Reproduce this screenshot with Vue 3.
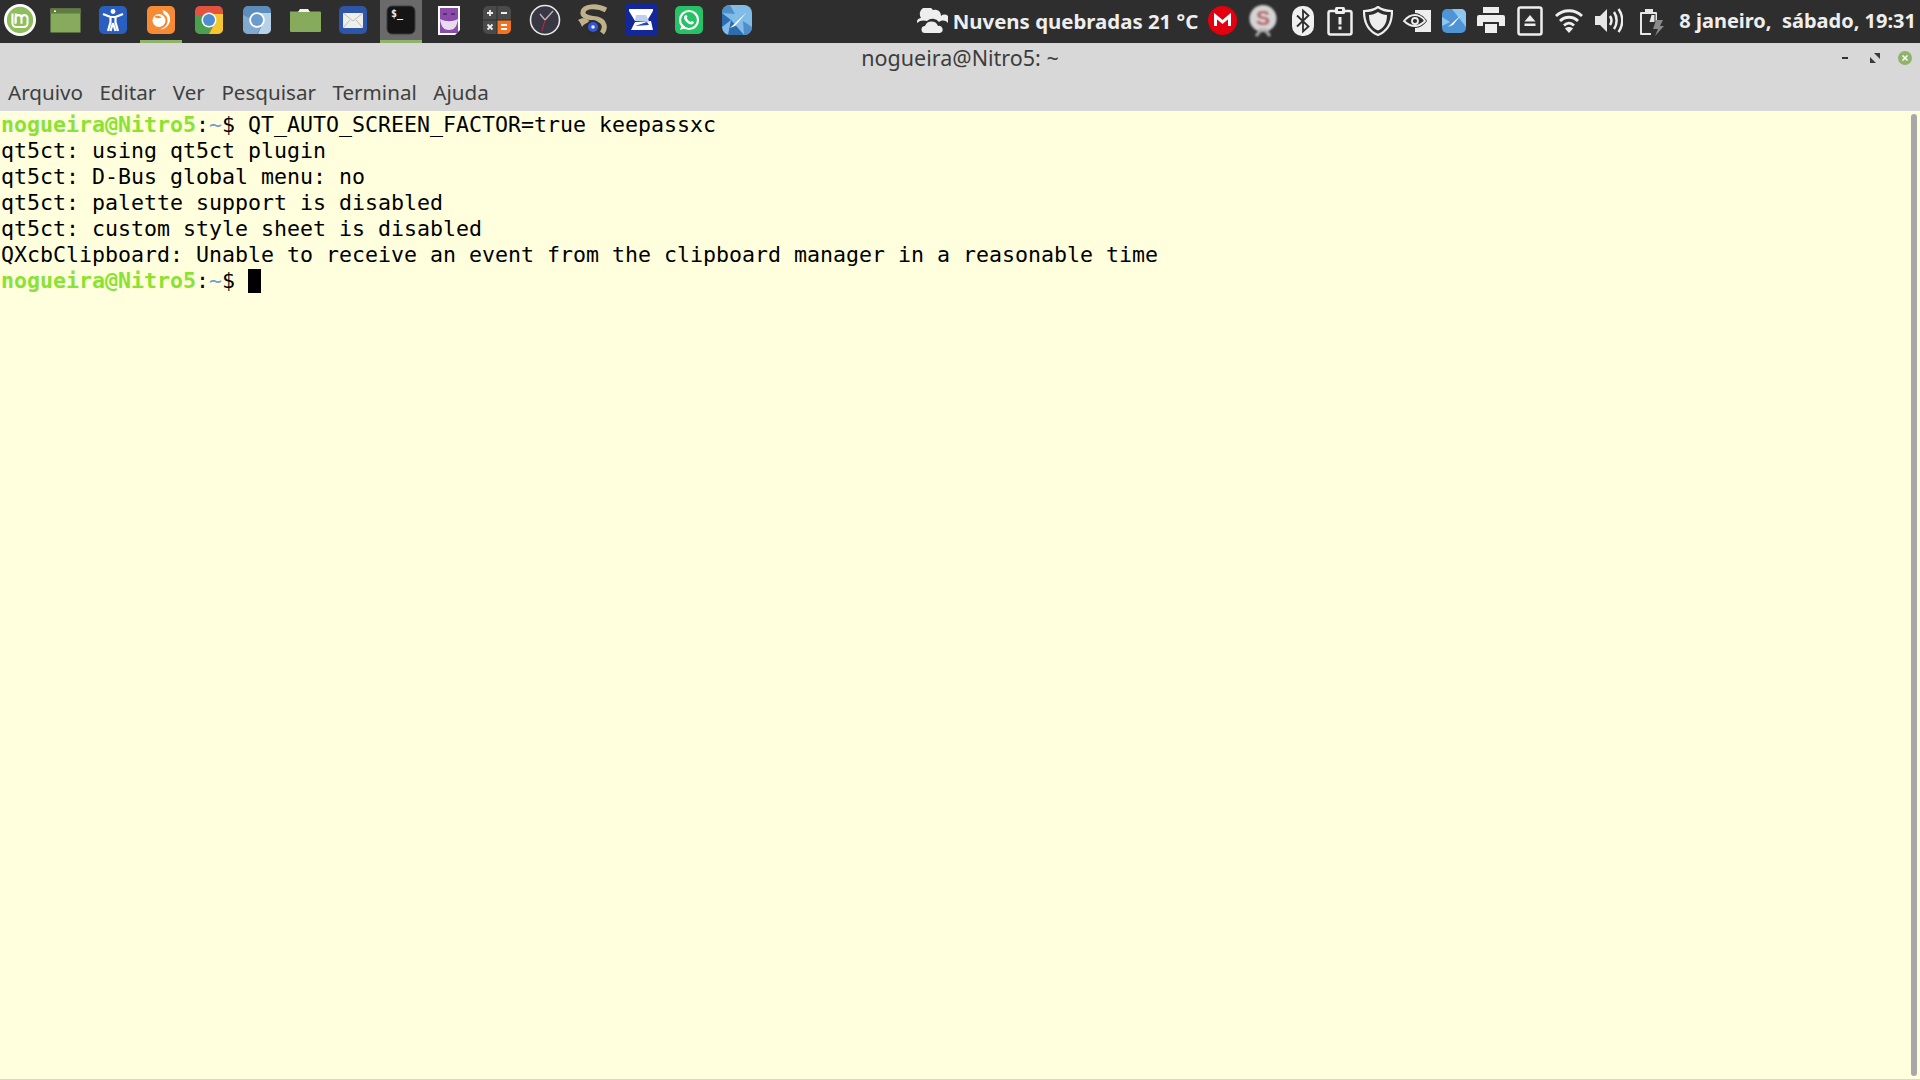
<script setup>
const lines = [
  'qt5ct: using qt5ct plugin',
  'qt5ct: D-Bus global menu: no',
  'qt5ct: palette support is disabled',
  'qt5ct: custom style sheet is disabled',
  'QXcbClipboard: Unable to receive an event from the clipboard manager in a reasonable time'
]
const menus = ['Arquivo', 'Editar', 'Ver', 'Pesquisar', 'Terminal', 'Ajuda']
</script>

<template>
  <div class="screen">
    <header class="panel">
      <div class="launchers">
        <div class="menu-btn">
          <svg width="32" height="32" viewBox="0 0 34 34"><circle cx="17" cy="17" r="17" fill="#fff"/><circle cx="17" cy="17" r="14" fill="#8fbf5a"/><path d="M9 10v10.500a4 4 0 0 0 4 4h8a4 4 0 0 0 4-4V15a3.200 3.200 0 0 0-6.400 0v6M18.600 15a3.200 3.200 0 0 0-6.400 0v6M12.500 10v10" fill="none" stroke="#fff" stroke-width="2.200"/></svg>
        </div>
        <div class="launcher">
          <svg width="31" height="25" viewBox="0 0 31 25"><rect x=".5" y=".5" width="30" height="24" fill="#87ab5c"/><rect x=".5" y=".5" width="30" height="5" fill="#5f7d42"/><rect x="4" y="2.500" width="2" height="1.500" fill="#fff"/></svg>
        </div>
        <div class="launcher">
          <svg width="30" height="30" viewBox="0 0 30 30"><rect x="1" y="1" width="28" height="28" rx="5" fill="#2a5fc0"/><circle cx="15" cy="6.500" r="2.400" fill="#fff"/><path d="M5 9l7.500 3v5L10 26M25 9l-7.500 3v5l2.500 9M12.500 12h5M15 18l-2.500 8M15 18l2.500 8" fill="none" stroke="#fff" stroke-width="2.200"/></svg>
        </div>
        <div class="launcher active">
          <svg width="30" height="30" viewBox="0 0 30 30"><rect x="1" y="1" width="28" height="28" rx="5" fill="#f78a35"/><circle cx="13" cy="15.500" r="6.500" fill="#fff"/><path d="M16 5c5 1 9 5 8 11-1 5-5 8-10 8.500 5-2 8-5 7.500-9.500C21 11 19 8 16 5z" fill="#fff"/><path d="M8 12c3-2 6-1.500 7.500.5-2 1-4 1-5 .500z" fill="#f78a35"/><path d="M18 6c2 1 2.500 3 2 5l-3-3z" fill="#fff"/></svg>
        </div>
        <div class="launcher">
          <svg width="30" height="30" viewBox="0 0 30 30"><rect x="1" y="1" width="28" height="28" rx="5" fill="#e3513f"/><path d="M1 10v14a5 5 0 0 0 5 5h9l7-15z" fill="#4ba04f"/><path d="M15 9h14v15a5 5 0 0 1-5 5h-9l7-13z" fill="#f3c72d"/><circle cx="15" cy="15" r="7.500" fill="#fff"/><circle cx="15" cy="15" r="6" fill="#4d8ed0"/></svg>
        </div>
        <div class="launcher">
          <svg width="30" height="30" viewBox="0 0 30 30"><rect x="1" y="1" width="28" height="28" rx="5" fill="#5d8dbc"/><path d="M15 8h14v16a5 5 0 0 1-5 5h-8l6-14z" fill="#b7d1e8"/><path d="M1 10v14a5 5 0 0 0 5 5h9l5-10z" fill="#82aad0"/><circle cx="15" cy="15" r="7.800" fill="#fff"/><circle cx="15" cy="15" r="6" fill="#6c9bd0"/></svg>
        </div>
        <div class="launcher">
          <svg width="32" height="28" viewBox="0 0 32 28"><path d="M1 5.500h30a1 1 0 0 1 1 1V25a1 1 0 0 1-1 1H2a1 1 0 0 1-1-1z" fill="#87ab5c"/><path d="M9 6l2-3h8l2 3z" fill="#f2f2f2"/></svg>
        </div>
        <div class="launcher">
          <svg width="30" height="30" viewBox="0 0 30 30"><rect x="1" y="1" width="28" height="28" rx="5" fill="#2f55a8"/><rect x="5" y="8" width="20" height="15" fill="#eeeeea"/><path d="M5 8l10 8 10-8M5 23l7-8M25 23l-7-8" fill="none" stroke="#bdbdb8"/></svg>
        </div>
        <div class="launcher focused">
          <svg width="30" height="30" viewBox="0 0 30 30"><rect x="1" y="1" width="28" height="28" rx="5" fill="#151515" stroke="#3c3c3c"/><text x="5" y="12" class="term-glyph">$_</text></svg>
        </div>
        <div class="launcher">
          <svg width="24" height="31" viewBox="0 0 24 31"><path d="M1 1h22v24l-5 5H1z" fill="#fff"/><rect x="3" y="3" width="18" height="25" fill="#8a4bab"/><path d="M3 14c6 3 12 3 18 0-1 8-4 11-9 11s-8-3-9-11z" fill="#e9dcee"/><path d="M6 9h4M14 9h4" stroke="#4c2368" stroke-width="1.500"/></svg>
        </div>
        <div class="launcher">
          <svg width="30" height="30" viewBox="0 0 30 30"><rect x="1" y="1" width="28" height="28" rx="5" fill="#4a4a4a"/><path d="M15 15h14v9a5 5 0 0 1-5 5h-9z" fill="#f47321"/><path d="M15 1v28M1 15h28" stroke="#2e2e2e"/><path d="M5 8h6M8 5v6M19 8h6M5.500 19.500l5 5M10.500 19.500l-5 5" stroke="#eee" stroke-width="1.800"/><path d="M19 20h6M19 24h6" stroke="#fff" stroke-width="1.800"/></svg>
        </div>
        <div class="launcher">
          <svg width="32" height="32" viewBox="0 0 32 32"><circle cx="16" cy="16" r="14.500" fill="#3a3745" stroke="#e8e8e8" stroke-width="1.600"/><path d="M16 16l-5-6M16 16l8-9" stroke="#b9b9b9" stroke-width="1.300"/><path d="M16 16l-3 11" stroke="#b32d3a"/></svg>
        </div>
        <div class="launcher">
          <svg width="32" height="33" viewBox="0 0 32 33"><path d="M29 6C20 1 7 2 6 8c-1 5 8 6 14 7 8 2 9 9 5 14" fill="none" stroke="#bfb28a" stroke-width="5"/><path d="M1 16c5-3 10-2 13 3-4-1-7 1-9 4-1-3-2-5-4-7z" fill="#bfb28a"/><circle cx="16" cy="23" r="7" fill="#2c2c2c"/><circle cx="16" cy="23" r="5" fill="#3256d8"/><circle cx="16" cy="23" r="1.800" fill="#e8eeff"/></svg>
        </div>
        <div class="launcher">
          <svg width="32" height="32" viewBox="0 0 32 32"><rect width="32" height="32" rx="2" fill="#14279a"/><path d="M4 5h24v2l-6 10H10L4 7z" fill="#fff"/><path d="M11 11h10l3 6H10z" fill="#bcd0ee"/><path d="M6 26l4-8 16-1 2 9z" fill="#fff"/><path d="M10 22l12-4 2 3z" fill="#2248b8"/></svg>
        </div>
        <div class="launcher">
          <svg width="30" height="30" viewBox="0 0 30 30"><rect x="1" y="1" width="28" height="28" rx="5" fill="#27c265"/><circle cx="15" cy="15" r="9" fill="none" stroke="#fff" stroke-width="2.200"/><path d="M6 25l2-6 4 4z" fill="#fff"/><path d="M11 10.500c1-1 2-.5 2.500 1l-.8 1.500c1 2 2 3 4 4l1.300-1c1.500.5 2.500 1.500 1.500 2.500-2 2-5 .5-7-1.500s-3.500-4.500-1.500-6.500z" fill="#fff"/></svg>
        </div>
        <div class="launcher">
          <svg width="30" height="30" viewBox="0 0 30 30"><rect width="30" height="30" rx="8" fill="#80bce8"/><path d="M0 8l9 7-9 7zM9 15l-3 15h16z" fill="#2e6cad"/><path d="M0 8a8 8 0 0 1 8-8l5 9z" fill="#4f8fc9"/><path d="M22 30a8 8 0 0 0 8-8l-9-6z" fill="#4f8fc9"/><path d="M8 23L25 7 13 21z" fill="#fff"/></svg>
        </div>
      </div>

      <div class="status">
        <div class="weather">
          <svg width="31" height="25" viewBox="0 0 31 25"><path d="M0 15a4 4 0 0 1 4-5 7 7 0 0 1 12-8 6 6 0 0 1 8 6 4 4 0 0 1 7 7c-3-3-6-3-9-1a8 8 0 0 0-12-1c-3-1-7-1-10 2z" fill="#eee"/><path d="M8 25a3.500 3.500 0 0 1 0-7 7 7 0 0 1 13 0 3.500 3.500 0 0 1 2 7z" fill="#eee"/></svg>
          <span>Nuvens quebradas 21 °C</span>
        </div>
        <div class="tray">
          <div class="slot slot-40"><svg width="29" height="29" viewBox="0 0 29 29"><circle cx="14.500" cy="14.500" r="14.500" fill="#e3000f"/><path d="M7.500 20V10l7 6 7-6v10" fill="none" stroke="#fff" stroke-width="3"/></svg></div>
          <div class="slot slot-42"><svg class="blurred" width="30" height="32" viewBox="0 0 30 32"><circle cx="15" cy="13.500" r="13.500" fill="#d4d4d4"/><path d="M8 31l6-7M22 31l-6-7" stroke="#aaa" stroke-width="3"/><text x="15" y="20" class="s-glyph">S</text></svg></div>
          <div class="slot slot-38"><svg width="22" height="30" viewBox="0 0 22 30"><rect width="22" height="30" rx="10" fill="#f0f0f0"/><path d="M5 9.500l11.500 11-5.500 5V4.500l5.500 5L5 20.500" fill="none" stroke="#2e2e2e" stroke-width="1.800"/></svg></div>
          <div class="slot slot-36"><svg width="26" height="30" viewBox="0 0 26 30"><rect x="1.500" y="5" width="23" height="23.500" rx="2" fill="none" stroke="#eee" stroke-width="2.500"/><rect x="8" y="1" width="10" height="7" rx="1.500" fill="#eee"/><rect x="11" y="3" width="4" height="2" fill="#2e2e2e"/><path d="M11.500 11h3v7.500h-3zM11.500 20.500h3v3h-3z" fill="#eee"/></svg></div>
          <div class="slot slot-39"><svg width="30" height="30" viewBox="0 0 30 30"><path d="M15 1c4 3 9 4 14 4 0 12-4 20-14 24C5 25 1 17 1 5c5 0 10-1 14-4z" fill="none" stroke="#eee" stroke-width="2.200"/><path d="M15 6c3 2 6 3 9 3 0 8-3 13-9 15.500C9 22 6 17 6 9c3 0 6-1 9-3z" fill="#eee"/></svg></div>
          <div class="slot slot-38"><svg width="30" height="22" viewBox="0 0 30 22"><path d="M14 0h16v22H14z" fill="#eee"/><path d="M1 11c5-6 9-8 13-8s9 3 12 8c-3 4-7 7-12 7S5 15 1 11z" fill="#2e2e2e"/><path d="M3 11c4-5 8-6 11-6s8 2 10 6c-3 3-6 5-10 5s-8-2-11-5z" fill="none" stroke="#eee" stroke-width="1.800"/><circle cx="14" cy="11" r="3" fill="none" stroke="#eee" stroke-width="1.800"/></svg></div>
          <div class="slot slot-37"><svg width="24" height="24" viewBox="0 0 24 24"><rect width="24" height="24" rx="5" fill="#4f94d4"/><path d="M10 0h9a5 5 0 0 1 5 5v13z" fill="#8fc6ee"/><path d="M0 8l8 5-8 4z" fill="#8fc6ee"/><path d="M6 18L19 6 11 16z" fill="#fff"/></svg></div>
          <div class="slot slot-38"><svg width="28" height="27" viewBox="0 0 28 27"><path d="M6 0h16v6H6z" fill="#eee"/><path d="M2 8h24a2 2 0 0 1 2 2v9h-6v-4H6v4H0v-9a2 2 0 0 1 2-2z" fill="#eee"/><rect x="8" y="17" width="12" height="9" fill="#eee"/></svg></div>
          <div class="slot slot-40"><svg width="26" height="30" viewBox="0 0 26 30"><rect x="1.500" y="1.500" width="23" height="27" rx="2" fill="none" stroke="#eee" stroke-width="2.500"/><path d="M13 9l5.500 6.500h-11zM7.500 17.500h11V20h-11z" fill="#eee"/></svg></div>
          <div class="slot slot-38"><svg width="30" height="27" viewBox="0 0 30 27"><path d="M2 9c7-7 19-7 26 0M6 14c5-5 13-5 18 0M10 18.500c3-3 7-3 10 0" fill="none" stroke="#eee" stroke-width="2.800"/><path d="M15 26l-4-4.500c2-2 6-2 8 0z" fill="#eee"/></svg></div>
          <div class="slot slot-42 before-battery"><svg width="28" height="27" viewBox="0 0 28 27"><path d="M0 9h5l7-7v23l-7-7H0z" fill="#e6e6e6"/><path d="M15 9c2 3 2 6 0 9M19 5c3.500 5 3.500 12 0 17M23.500 2c5 7 5 16 0 23" fill="none" stroke="#eee" stroke-width="2.500"/></svg></div>
          <div class="slot slot-36"><svg width="28" height="30" viewBox="0 0 28 30"><path d="M8 3h8v3h3a1 1 0 0 1 1 1v8h-1.500V8H5v19h9v2H4a1 1 0 0 1-1-1V7a1 1 0 0 1 1-1h4z" fill="#e6e6e6"/><path d="M6.500 16h11v-7h-3l-2 7" fill="#e6e6e6"/><path d="M19 14h7l-3 6h4l-9 10 3-7h-5z" fill="#8a8a8a"/></svg></div>
        </div>
        <div class="clock">8 janeiro,&nbsp; sábado, 19:31</div>
      </div>
    </header>

    <div class="titlebar">
      <span class="title">nogueira@Nitro5: ~</span>
      <div class="win-buttons">
        <span class="minimize"></span>
        <svg class="restore" width="10" height="10" viewBox="0 0 10 10"><path d="M10 0v6L4 0zM0 10V4l6 6z" fill="#3a3a3a"/></svg>
        <svg width="14" height="14" viewBox="0 0 14 14"><circle cx="7" cy="7" r="7" fill="#8fb36a"/><path d="M4.500 4.500l5 5M9.500 4.500l-5 5" stroke="#fff" stroke-width="1.600"/></svg>
      </div>
    </div>

    <nav class="menubar">
      <span v-for="m in menus" :key="m" class="menu">{{ m }}</span>
    </nav>

    <main class="terminal">
      <div class="output">
        <div class="line"><b class="user">nogueira@Nitro5</b>:<span class="path">~</span>$ QT_AUTO_SCREEN_FACTOR=true keepassxc</div>
        <div v-for="l in lines" :key="l" class="line">{{ l }}</div>
        <div class="line"><b class="user">nogueira@Nitro5</b>:<span class="path">~</span>$ <span class="cursor"></span></div>
      </div>
      <div class="scrollbar"><div class="thumb"></div></div>
    </main>
  </div>
</template>

<style>
html, body { margin: 0; padding: 0; overflow: hidden; }
</style>

<style scoped>
.screen {
  width: 1920px;
  height: 1080px;
  display: flex;
  flex-direction: column;
  background: #d8d8d8;
  overflow: hidden;
}
.panel {
  height: 43px;
  flex: none;
  background: #2e2e2e;
  display: flex;
  justify-content: space-between;
  align-items: stretch;
  font-family: "Noto Sans", sans-serif;
  color: #eee;
}
.launchers { display: flex; gap: 6px; align-items: stretch; }
.menu-btn { width: 40px; margin-right: -6px; padding-bottom: 3px; display: flex; align-items: center; justify-content: center; }
.launcher {
  width: 42px;
  display: flex;
  align-items: center;
  justify-content: center;
  box-sizing: border-box;
  border-bottom: 3px solid transparent;
}
.launcher:nth-child(2) { margin-left: 4px; }
.launcher.active { border-bottom-color: #8fb36a; }
.launcher.focused { border-bottom-color: #8fb36a; background: #6a6a6a; }
.term-glyph { font: 700 10px "DejaVu Sans Mono", monospace; fill: #eee; }
.status { display: flex; align-items: center; padding-right: 4px; padding-bottom: 2px; }
.weather { display: flex; align-items: center; gap: 5px; font-weight: 700; font-size: 20.4px; }
.tray { display: flex; align-items: center; margin-left: 4px; }
.slot { display: flex; align-items: center; justify-content: center; }
.slot-36 { width: 36px; }
.slot-37 { width: 37px; }
.slot-38 { width: 38px; }
.slot-39 { width: 39px; }
.slot-40 { width: 40px; }
.slot-42 { width: 42px; }
.before-battery { margin-right: 3px; }
.blurred { filter: blur(1px); }
.s-glyph { font: 700 21px "Liberation Sans", sans-serif; fill: #b8666c; text-anchor: middle; }
.clock { font-weight: 700; font-size: 20px; margin-left: 10px; white-space: nowrap; }
.titlebar {
  height: 40px;
  flex: none;
  box-sizing: border-box;
  padding-bottom: 11px;
  position: relative;
  display: flex;
  align-items: center;
  justify-content: center;
  font-family: "Noto Sans", sans-serif;
  font-size: 21.5px;
  color: #3c3c3c;
}
.win-buttons {
  position: absolute;
  right: 8px;
  top: 8px;
  height: 14px;
  display: flex;
  align-items: center;
  gap: 18px;
}
.minimize { width: 6px; height: 2px; background: #333; margin-right: 4px; }
.menubar {
  height: 28px;
  flex: none;
  display: flex;
  gap: 16.5px;
  padding-left: 8px;
  font-family: "Noto Sans", sans-serif;
  font-size: 20.6px;
  line-height: 18px;
  color: #3f3f3f;
}
.terminal {
  flex: 1;
  display: flex;
  background: #ffffdd;
  border-bottom: 1px solid #d8d8d8;
  min-height: 0;
}
.output {
  flex: 1;
  padding: 1px 0 0 1px;
  font-family: "DejaVu Sans Mono", monospace;
  font-size: 21.6px;
  line-height: 26px;
  color: #000;
  white-space: pre;
}
.line { height: 26px; }
.user { color: #8ae234; font-weight: 700; }
.path { color: #729fcf; }
.cursor {
  display: inline-block;
  width: 13px;
  height: 24px;
  background: #000;
  vertical-align: -5px;
}
.scrollbar { width: 14px; flex: none; padding: 3px 3px 3px 5px; box-sizing: border-box; }
.thumb { height: 100%; width: 6px; background: #a8a8a8; border-radius: 3px; }
</style>
